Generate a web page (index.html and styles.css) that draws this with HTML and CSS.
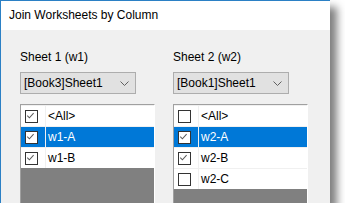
FILE: index.html
```html
<!DOCTYPE html>
<html lang="en">

<head>
  <meta charset="UTF-8">
  <meta name="viewport" content="width=device-width, initial-scale=1.0">
  <title>Join Worksheets by Column</title>
  <link rel="stylesheet" href="styles.css">
</head>

<body>
  <div class="window">
    <div class="titlebar">Join Worksheets by Column</div>
    <div class="content">
      <div class="col">
        <div class="label">Sheet 1 (w1)</div>
        <div class="combo">
          <span>[Book3]Sheet1</span>
          <svg class="chevron" width="9" height="5" viewBox="0 0 9 5"><polyline points="0.5,0.5 4.5,4.5 8.5,0.5" /></svg>
        </div>
        <div class="list">
          <div class="row">
            <div class="check"><span class="box on"><svg viewBox="0 0 13 13"><polyline points="2.5,6.5 5,9 10,3.5" /></svg></span></div>
            <div class="text">&lt;All&gt;</div>
          </div>
          <div class="row selected">
            <div class="check"><span class="box on"><svg viewBox="0 0 13 13"><polyline points="2.5,6.5 5,9 10,3.5" /></svg></span></div>
            <div class="text">w1-A</div>
          </div>
          <div class="row">
            <div class="check"><span class="box on"><svg viewBox="0 0 13 13"><polyline points="2.5,6.5 5,9 10,3.5" /></svg></span></div>
            <div class="text">w1-B</div>
          </div>
        </div>
      </div>
      <div class="col">
        <div class="label">Sheet 2 (w2)</div>
        <div class="combo">
          <span>[Book1]Sheet1</span>
          <svg class="chevron" width="9" height="5" viewBox="0 0 9 5"><polyline points="0.5,0.5 4.5,4.5 8.5,0.5" /></svg>
        </div>
        <div class="list">
          <div class="row">
            <div class="check"><span class="box"></span></div>
            <div class="text">&lt;All&gt;</div>
          </div>
          <div class="row selected">
            <div class="check"><span class="box on"><svg viewBox="0 0 13 13"><polyline points="2.5,6.5 5,9 10,3.5" /></svg></span></div>
            <div class="text">w2-A</div>
          </div>
          <div class="row">
            <div class="check"><span class="box on"><svg viewBox="0 0 13 13"><polyline points="2.5,6.5 5,9 10,3.5" /></svg></span></div>
            <div class="text">w2-B</div>
          </div>
          <div class="row">
            <div class="check"><span class="box"></span></div>
            <div class="text">w2-C</div>
          </div>
        </div>
      </div>
    </div>
  </div>
</body>

</html>
```

FILE: styles.css
```css
body {
  margin: 0;
  background: #fff;
  font-family: "Liberation Sans", Arial, sans-serif;
  font-size: 12px;
  color: #000;
}

.window {
  width: 329px;
  height: 202px;
  border-top: 1px solid #2b80c5;
  border-left: 1px solid #2b80c5;
  background: #f0f0f0;
  box-shadow: 7px 7px 8px rgba(0, 0, 0, 0.5);
  overflow: hidden;
}

.titlebar {
  height: 29px;
  line-height: 29px;
  padding-left: 8px;
  background: #fff;
}

.content {
  display: flex;
  gap: 18px;
  padding: 19px 0 0 19px;
}

.col {
  width: 135px;
  display: flex;
  flex-direction: column;
}

.label {
  height: 16px;
  line-height: 16px;
}

.combo {
  box-sizing: border-box;
  width: 116px;
  height: 22px;
  margin-top: 7px;
  padding: 0 6px 0 3px;
  border: 1px solid #adadad;
  background: #e1e1e1;
  display: flex;
  align-items: center;
  justify-content: space-between;
}

.chevron polyline {
  fill: none;
  stroke: #606060;
  stroke-width: 1;
}

.list {
  margin-top: 10px;
  height: 120px;
  border-top: 1px solid #a0a0a0;
  border-left: 1px solid #a0a0a0;
  border-right: 1px solid #fff;
  background: #808080;
}

.row {
  display: flex;
  height: 20px;
  border-top: 1px solid #f0f0f0;
  background: #fff;
}

.row.selected {
  background: #0078d7;
  color: #fff;
}

.check {
  width: 25px;
  border-right: 1px solid #f0f0f0;
  display: flex;
  align-items: center;
  padding-left: 4px;
  box-sizing: border-box;
}

.box {
  box-sizing: border-box;
  width: 13px;
  height: 13px;
  border: 1px solid #333;
  background: #fff;
  display: block;
}

.box svg {
  display: block;
  width: 11px;
  height: 11px;
  margin: 0;
}

.box svg polyline {
  fill: none;
  stroke: #5a5a5a;
  stroke-width: 1.2;
  transform: translate(-1px, -1px);
}

.text {
  padding-left: 2px;
  line-height: 20px;
}
```
